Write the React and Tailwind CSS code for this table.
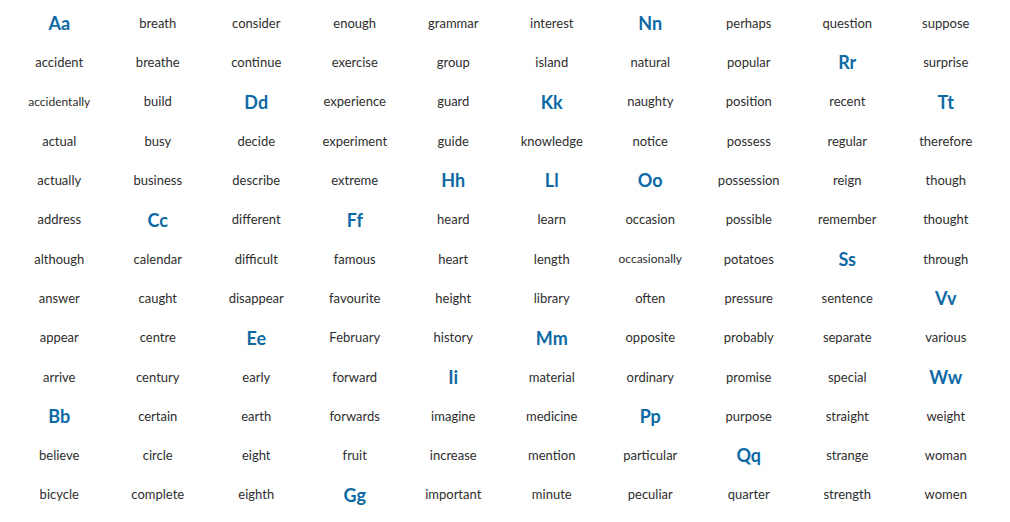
const columns = [
  ["Aa", "accident", "accidentally", "actual", "actually", "address", "although", "answer", "appear", "arrive", "Bb", "believe", "bicycle"],
  ["breath", "breathe", "build", "busy", "business", "Cc", "calendar", "caught", "centre", "century", "certain", "circle", "complete"],
  ["consider", "continue", "Dd", "decide", "describe", "different", "difficult", "disappear", "Ee", "early", "earth", "eight", "eighth"],
  ["enough", "exercise", "experience", "experiment", "extreme", "Ff", "famous", "favourite", "February", "forward", "forwards", "fruit", "Gg"],
  ["grammar", "group", "guard", "guide", "Hh", "heard", "heart", "height", "history", "Ii", "imagine", "increase", "important"],
  ["interest", "island", "Kk", "knowledge", "Ll", "learn", "length", "library", "Mm", "material", "medicine", "mention", "minute"],
  ["Nn", "natural", "naughty", "notice", "Oo", "occasion", "occasionally", "often", "opposite", "ordinary", "Pp", "particular", "peculiar"],
  ["perhaps", "popular", "position", "possess", "possession", "possible", "potatoes", "pressure", "probably", "promise", "purpose", "Qq", "quarter"],
  ["question", "Rr", "recent", "regular", "reign", "remember", "Ss", "sentence", "separate", "special", "straight", "strange", "strength"],
  ["suppose", "surprise", "Tt", "therefore", "though", "thought", "through", "Vv", "various", "Ww", "weight", "woman", "women"],
];

const small = ["accidentally", "occasionally"];

const Cell = ({ word }) => {
  const isHeader = word.length === 2 && word[0] !== word[0].toLowerCase();
  if (isHeader) {
    return (
      <div className="h-[39.3px] flex items-center justify-center text-[18px] font-bold text-[#0d6aa5]">
        {word}
      </div>
    );
  }
  return (
    <div
      className={`h-[39.3px] flex items-center justify-center text-[#2e2e2e] ${
        small.includes(word) ? "text-[12px]" : "text-[13px]"
      }`}
    >
      {word}
    </div>
  );
};

const App = () => {
  return (
    <div className="w-[1010px] h-[522px] bg-white pl-[10px] pt-[4px] font-['Lato','Open_Sans',sans-serif] overflow-hidden">
      <div className="grid grid-cols-10 w-[985px]">
        {columns.map((col, i) => (
          <div key={i} className="flex flex-col">
            {col.map((w) => (
              <Cell key={w} word={w} />
            ))}
          </div>
        ))}
      </div>
    </div>
  );
};

export default App;
